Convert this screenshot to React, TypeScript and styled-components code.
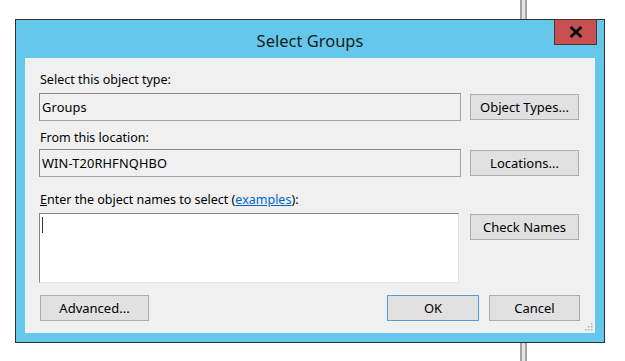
import React from "react";
import styled, { createGlobalStyle } from "styled-components";

const GlobalStyle = createGlobalStyle`
  html, body {
    margin: 0;
    padding: 0;
    background: #ffffff;
  }
  body {
    font-family: "Noto Sans", "Liberation Sans", sans-serif;
    color: #000000;
  }
`;

const Desktop = styled.div`
  position: relative;
  width: 625px;
  height: 361px;
  overflow: hidden;
  box-sizing: border-box;
  padding: 19px 0 0 15px;
`;

const Pipe = styled.div`
  position: absolute;
  left: 520px;
  top: 0;
  bottom: 0;
  width: 7px;
  box-sizing: border-box;
  border-left: 2px solid #a4a4a4;
  border-right: 2px solid #a4a4a4;
  background: #e4e4e4;
`;

const Window = styled.div`
  position: relative;
  z-index: 1;
  width: 590px;
  height: 324px;
  box-sizing: border-box;
  border: 1px solid #2f2f2f;
  background: #64c8ea;
  padding: 0 9px 9px 9px;
  display: flex;
  flex-direction: column;
`;

const TitleBar = styled.div`
  height: 38px;
  box-sizing: border-box;
  padding-top: 3px;
  display: flex;
  align-items: center;
  justify-content: center;
  font-size: 16.5px;
  color: #1b1b1b;
`;

const CloseButton = styled.div`
  position: absolute;
  top: -1px;
  right: 7px;
  width: 43px;
  height: 26px;
  box-sizing: border-box;
  border: 1px solid #4a3434;
  background: #c75050;
  display: flex;
  align-items: center;
  justify-content: center;
`;

const Client = styled.div`
  position: relative;
  flex: 1;
  background: #f0f0f0;
  box-sizing: border-box;
  padding: 14px 16px 0 14px;
  display: flex;
  flex-direction: column;
`;

const Label = styled.div<{ $top: number }>`
  margin-top: ${(p) => p.$top}px;
  margin-left: 1px;
  font-size: 12.5px;
  line-height: 15px;
  white-space: nowrap;
`;

const Link = styled.span`
  color: #0066cc;
  text-decoration: underline;
`;

const FieldRow = styled.div<{ $top: number; $align?: string }>`
  margin-top: ${(p) => p.$top}px;
  display: flex;
  align-items: ${(p) => p.$align ?? "center"};
  gap: 9px;
`;

const ReadonlyBox = styled.div`
  width: 422px;
  height: 28px;
  box-sizing: border-box;
  border: 1px solid #a2a2a2;
  border-top-color: #8c8c8c;
  border-left-color: #8c8c8c;
  background: #f0f0f0;
  padding: 0 0 1px 2px;
  display: flex;
  align-items: center;
  font-size: 12.8px;
  letter-spacing: 0.15px;
`;

const NamesBox = styled.div`
  width: 420px;
  height: 70px;
  margin-right: 2px;
  box-sizing: border-box;
  border: 1px solid #e3e3e3;
  border-top-color: #848484;
  border-left-color: #848484;
  background: #ffffff;
  padding: 3px 0 0 2px;
`;

const Caret = styled.div`
  width: 1px;
  height: 16px;
  background: #3a3a3a;
`;

const Button = styled.div<{ $w: number; $default?: boolean }>`
  width: ${(p) => p.$w}px;
  height: 26px;
  flex: none;
  box-sizing: border-box;
  border: 1px solid ${(p) => (p.$default ? "#5b9bd5" : "#acacac")};
  background: #e1e1e1;
  display: flex;
  align-items: center;
  justify-content: center;
  font-size: 13px;
  padding-bottom: 1px;
`;

const Footer = styled.div`
  margin-top: 12px;
  display: flex;
  align-items: center;
`;

const FooterRight = styled.div`
  margin-left: auto;
  margin-right: -1px;
  display: flex;
  gap: 10px;
`;

const Grip = styled.svg`
  position: absolute;
  right: 2px;
  bottom: 2px;
`;

export default function App() {
  return (
    <>
      <GlobalStyle />
      <Desktop>
        <Pipe />
        <Window>
          <TitleBar>Select Groups</TitleBar>
          <CloseButton>
            <svg width="14" height="12" viewBox="0 0 14 12">
              <path d="M1.5 1 L12.5 11 M12.5 1 L1.5 11" stroke="#000" strokeWidth="2.8" />
            </svg>
          </CloseButton>
          <Client>
            <Label $top={0}>Select this object type:</Label>
            <FieldRow $top={6}>
              <ReadonlyBox>Groups</ReadonlyBox>
              <Button $w={109}>Object Types...</Button>
            </FieldRow>
            <Label $top={9}>From this location:</Label>
            <FieldRow $top={4}>
              <ReadonlyBox>WIN-T20RHFNQHBO</ReadonlyBox>
              <Button $w={109}>Locations...</Button>
            </FieldRow>
            <Label $top={15}>
              <u>E</u>nter the object names to select (<Link>examples</Link>):
            </Label>
            <FieldRow $top={6} $align="flex-start">
              <NamesBox>
                <Caret />
              </NamesBox>
              <Button $w={109} style={{ marginTop: 1 }}>
                Check Names
              </Button>
            </FieldRow>
            <Footer>
              <Button $w={109} style={{ marginLeft: 1 }}>
                Advanced...
              </Button>
              <FooterRight>
                <Button $w={92} $default>
                  OK
                </Button>
                <Button $w={91}>Cancel</Button>
              </FooterRight>
            </Footer>
            <Grip width="10" height="10" viewBox="0 0 10 10">
              <g fill="#b4b4b4">
                <rect x="8" y="2" width="1.5" height="1.5" />
                <rect x="5" y="5" width="1.5" height="1.5" />
                <rect x="8" y="5" width="1.5" height="1.5" />
                <rect x="2" y="8" width="1.5" height="1.5" />
                <rect x="5" y="8" width="1.5" height="1.5" />
                <rect x="8" y="8" width="1.5" height="1.5" />
              </g>
            </Grip>
          </Client>
        </Window>
      </Desktop>
    </>
  );
}
